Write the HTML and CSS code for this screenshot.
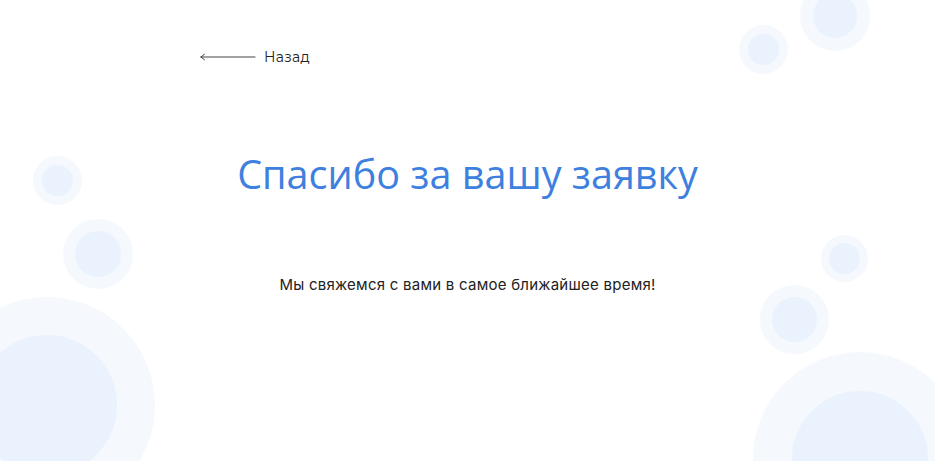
FILE: index.html
```html
<!DOCTYPE html>
<html lang="ru">
<head>
<meta charset="utf-8">
<title>Спасибо за вашу заявку</title>
<link rel="stylesheet" href="styles.css">
</head>
<body>
<div class="page">
  <div class="bubbles" aria-hidden="true">
    <span class="bubble b1"></span>
    <span class="bubble b2"></span>
    <span class="bubble b3"></span>
    <span class="bubble b4"></span>
    <span class="bubble b5"></span>
    <span class="bubble b6"></span>
    <span class="bubble b7"></span>
    <span class="bubble b8"></span>
  </div>
  <main class="content">
    <a class="back" href="#">
      <svg class="back-arrow" width="56" height="8" viewBox="0 0 56 8"><path d="M1 4H55M1 4L4.5 1.2M1 4L4.5 6.8" stroke="#444" stroke-width="1" fill="none" stroke-linecap="round"/></svg>
      <span>Назад</span>
    </a>
    <h1 class="title">Спасибо за вашу заявку</h1>
    <p class="subtitle">Мы свяжемся с вами в самое ближайшее время!</p>
  </main>
</div>
</body>
</html>
```
FILE: styles.css
```css
* { box-sizing: border-box; }
html, body { margin: 0; padding: 0; background: #fff; }
.page {
  position: relative;
  width: 935px;
  height: 461px;
  overflow: hidden;
  font-family: "Open Sans", "Noto Sans", sans-serif;
}
.bubbles { position: absolute; inset: 0; z-index: 0; }
.bubble {
  position: absolute;
  border-radius: 50%;
  background: #eaf2fd;
  box-sizing: content-box;
  border-style: solid;
  border-color: #f5f9fe;
}
.b1 { left: 800px; top: -19px; width: 44px; height: 44px; border-width: 13px; }
.b2 { left: 739px; top: 24.5px; width: 31px; height: 31px; border-width: 9px; }
.b3 { left: 33px; top: 155.5px; width: 31px; height: 31px; border-width: 9px; }
.b4 { left: 62.5px; top: 218.5px; width: 46px; height: 46px; border-width: 12px; }
.b5 { left: -61px; top: 297px; width: 140px; height: 140px; border-width: 38px; }
.b6 { left: 821px; top: 235px; width: 31px; height: 31px; border-width: 8.5px; }
.b7 { left: 760px; top: 284.5px; width: 45px; height: 45px; border-width: 12px; }
.b8 { left: 753px; top: 352px; width: 136px; height: 136px; border-width: 39px; }

.content {
  position: relative;
  z-index: 1;
  display: flex;
  flex-direction: column;
  padding: 47px 0 0 200px;
  width: 935px;
}
.back {
  display: flex;
  align-items: center;
  gap: 8px;
  color: #222;
  text-decoration: none;
  font-family: "Montserrat", "Inter", "Open Sans", sans-serif;
  font-size: 14px;
  line-height: 20px;
  height: 20px;
  letter-spacing: 0.3px;
}
.back-arrow { display: block; }
.title {
  margin: 79px 0 0 -200px;
  text-align: center;
  font-weight: 400;
  font-size: 39.6px;
  line-height: 56px;
  color: #3e80e0;
}
.subtitle {
  margin: 73px 0 0 -200px;
  text-align: center;
  font-family: "Inter", "Open Sans", sans-serif;
  font-size: 15px;
  line-height: 20px;
  color: #222;
  letter-spacing: 0.25px;
}
```
